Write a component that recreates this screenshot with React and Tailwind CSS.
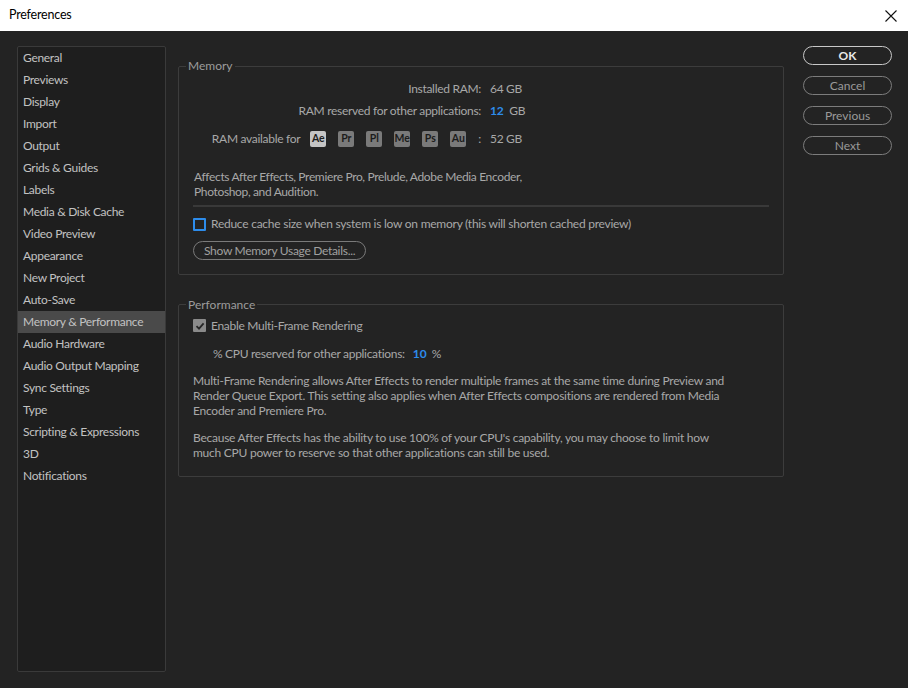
import React from 'react';

const font = { fontFamily: 'Lato, "Noto Sans", sans-serif' };

const categories = [
  'General', 'Previews', 'Display', 'Import', 'Output', 'Grids & Guides', 'Labels',
  'Media & Disk Cache', 'Video Preview', 'Appearance', 'New Project', 'Auto-Save',
  'Memory & Performance', 'Audio Hardware', 'Audio Output Mapping', 'Sync Settings',
  'Type', 'Scripting & Expressions', '3D', 'Notifications',
];

const apps = ['Ae', 'Pr', 'Pl', 'Me', 'Ps', 'Au'];

function Sidebar() {
  return (
    <div className="w-[149px] h-[626px] bg-[#1e1e1e] border border-[#3a3a3a] rounded-[2px] flex flex-col">
      {categories.map((c) => (
        <div
          key={c}
          className={
            'h-[22px] flex items-center pl-[5px] text-[12px] tracking-[-0.3px] text-[#c2c2c2] ' +
            (c === 'Memory & Performance' ? 'bg-[#4a4a4a]' : '')
          }
        >
          {c}
        </div>
      ))}
    </div>
  );
}

function PillButton({ children, primary }) {
  return (
    <button
      className={
        'h-[19px] w-[89px] rounded-full border text-[12px] leading-none flex items-center justify-center ' +
        (primary ? 'border-[#c8c8c8] text-[#e8e8e8] font-bold' : 'border-[#7c7c7c] text-[#9a9a9a]')
      }
    >
      {children}
    </button>
  );
}

function Group({ title, children, className }) {
  return (
    <fieldset className={'border border-[#3c3c3c] rounded-[2px] w-[606px] pl-[14px] ' + (className || '')}>
      <legend className="-ml-[7px] px-[2px] text-[12px] leading-[14px] text-[#9c9c9c]">{title}</legend>
      {children}
    </fieldset>
  );
}

function Row({ label, children }) {
  return (
    <div className="h-[22px] flex items-center text-[12px] tracking-[-0.3px] text-[#a8a8a8]">
      <div className="w-[288px] flex justify-end">{label}</div>
      <div className="ml-[9px] flex items-center">{children}</div>
    </div>
  );
}

export default function App() {
  return (
    <div className="w-[908px] h-[688px] bg-[#232323] flex flex-col overflow-hidden" style={font}>
      <div className="h-[31px] bg-white flex items-center justify-between pl-[9px] pr-[10px] shrink-0">
        <span className="text-[12.5px] text-black tracking-[-0.2px]">Preferences</span>
        <svg width="12" height="12" viewBox="0 0 12 12" className="mr-[1px]">
          <path d="M0.5 0.5 L11.5 11.5 M11.5 0.5 L0.5 11.5" stroke="#111" strokeWidth="1.1" />
        </svg>
      </div>

      <div className="flex pl-[17px] pt-[15px]">
        <Sidebar />

        <div className="ml-[12px] mt-[13px] flex flex-col">
          <Group title="Memory" className="pb-[13px]">
            <div className="pt-[5px]">
              <Row label="Installed RAM:">64 GB</Row>
              <Row label="RAM reserved for other applications:">
                <span className="text-[#2d8ceb] font-bold mr-[6px]">12</span>GB
              </Row>
              <div className="mt-[6px] h-[22px] flex items-center text-[12px] tracking-[-0.3px] text-[#a8a8a8]">
                <div className="w-[288px] flex justify-end items-center">
                  <span className="mr-[10px]">RAM available for</span>
                  <div className="flex gap-[12px] tracking-normal">
                    {apps.map((a) => (
                      <span
                        key={a}
                        className={
                          'w-[16px] h-[16px] rounded-[2px] flex items-center justify-center text-[10.5px] font-bold text-[#1c1c1c] ' +
                          (a === 'Ae' ? 'bg-[#c4c4c4]' : 'bg-[#7a7a7a]')
                        }
                      >
                        {a}
                      </span>
                    ))}
                  </div>
                  <span className="ml-[12px]">:</span>
                </div>
                <div className="ml-[9px]">52 GB</div>
              </div>
            </div>

            <p className="mt-[19px] text-[12px] leading-[15px] tracking-[-0.35px] text-[#a8a8a8] pl-[1px]">
              Affects After Effects, Premiere Pro, Prelude, Adobe Media Encoder,
              <br />
              Photoshop, and Audition.
            </p>

            <div className="mt-[6px] mr-[14px] h-[2px] bg-[#393939]" />

            <label className="mt-[8px] h-[18px] flex items-center text-[12px] tracking-[-0.25px] text-[#a8a8a8]">
              <span className="w-[13px] h-[13px] border-2 border-[#2d8ceb] rounded-[1px] mr-[5px]" />
              Reduce cache size when system is low on memory (this will shorten cached preview)
            </label>

            <button className="mt-[8px] h-[19px] px-[10px] rounded-full border border-[#7a7a7a] text-[12px] tracking-[-0.3px] leading-none text-[#a0a0a0]">
              Show Memory Usage Details...
            </button>
          </Group>

          <Group title="Performance" className="mt-[23px] pb-[16px]">
            <label className="mt-[5px] h-[18px] flex items-center text-[12px] tracking-[-0.3px] text-[#a8a8a8]">
              <span className="w-[13px] h-[13px] bg-[#8a8a8a] rounded-[1px] mr-[5px] flex items-center justify-center">
                <svg width="10" height="10" viewBox="0 0 10 10">
                  <path d="M1.5 5.2 L4 7.6 L8.6 2.4" fill="none" stroke="#262626" strokeWidth="1.8" />
                </svg>
              </span>
              Enable Multi-Frame Rendering
            </label>

            <div className="mt-[10px] h-[18px] flex items-center pl-[20px] text-[12px] text-[#a8a8a8] tracking-[-0.3px]">
              % CPU reserved for other applications:
              <span className="ml-[8px] mr-[5px] text-[#2d8ceb] font-bold tracking-normal">10</span>%
            </div>

            <p className="mt-[10px] text-[12px] leading-[15px] text-[#a8a8a8] tracking-[-0.25px]">
              Multi-Frame Rendering allows After Effects to render multiple frames at the same time during Preview and
              <br />
              Render Queue Export. This setting also applies when After Effects compositions are rendered from Media
              <br />
              Encoder and Premiere Pro.
            </p>

            <p className="mt-[12px] text-[12px] leading-[15px] text-[#a8a8a8] tracking-[-0.25px]">
              Because After Effects has the ability to use 100% of your CPU's capability, you may choose to limit how
              <br />
              much CPU power to reserve so that other applications can still be used.
            </p>
          </Group>
        </div>

        <div className="ml-[19px] flex flex-col gap-[11px]">
          <PillButton primary>OK</PillButton>
          <PillButton>Cancel</PillButton>
          <PillButton>Previous</PillButton>
          <PillButton>Next</PillButton>
        </div>
      </div>
    </div>
  );
}
